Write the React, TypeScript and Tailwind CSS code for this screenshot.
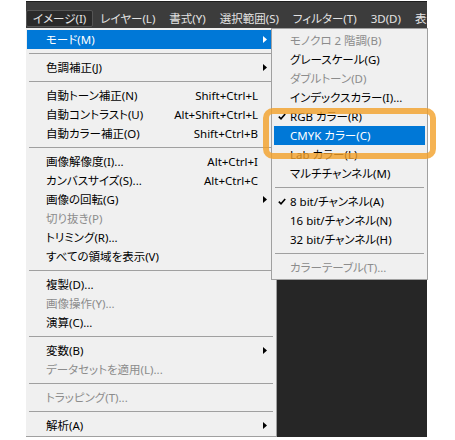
import React from "react";

type Item =
  | { kind: "sep" }
  | {
      kind?: "item";
      label: string;
      shortcut?: string;
      sub?: boolean;
      disabled?: boolean;
      active?: boolean;
      checked?: boolean;
    };

const SEP: Item = { kind: "sep" };

const mainItems: Item[] = [
  { label: "モード(M)", sub: true, active: true },
  SEP,
  { label: "色調補正(J)", sub: true },
  SEP,
  { label: "自動トーン補正(N)", shortcut: "Shift+Ctrl+L" },
  { label: "自動コントラスト(U)", shortcut: "Alt+Shift+Ctrl+L" },
  { label: "自動カラー補正(O)", shortcut: "Shift+Ctrl+B" },
  SEP,
  { label: "画像解像度(I)...", shortcut: "Alt+Ctrl+I" },
  { label: "カンバスサイズ(S)...", shortcut: "Alt+Ctrl+C" },
  { label: "画像の回転(G)", sub: true },
  { label: "切り抜き(P)", disabled: true },
  { label: "トリミング(R)..." },
  { label: "すべての領域を表示(V)" },
  SEP,
  { label: "複製(D)..." },
  { label: "画像操作(Y)...", disabled: true },
  { label: "演算(C)..." },
  SEP,
  { label: "変数(B)", sub: true },
  { label: "データセットを適用(L)...", disabled: true },
  SEP,
  { label: "トラッピング(T)...", disabled: true },
  SEP,
  { label: "解析(A)", sub: true },
];

const modeItems: Item[] = [
  { label: "モノクロ 2 階調(B)", disabled: true },
  { label: "グレースケール(G)" },
  { label: "ダブルトーン(D)", disabled: true },
  { label: "インデックスカラー(I)..." },
  { label: "RGB カラー(R)", checked: true },
  { label: "CMYK カラー(C)", active: true },
  { label: "Lab カラー(L)" },
  { label: "マルチチャンネル(M)" },
  SEP,
  { label: "8 bit/チャンネル(A)", checked: true },
  { label: "16 bit/チャンネル(N)" },
  { label: "32 bit/チャンネル(H)" },
  SEP,
  { label: "カラーテーブル(T)...", disabled: true },
];

const menuBar = ["イメージ(I)", "レイヤー(L)", "書式(Y)", "選択範囲(S)", "フィルター(T)", "3D(D)", "表示(V)"];

function Arrow({ white }: { white?: boolean }) {
  return (
    <svg width="4" height="7" viewBox="0 0 4 7" className="shrink-0">
      <path d="M0 0 L4 3.5 L0 7 Z" fill={white ? "#ffffff" : "#000000"} />
    </svg>
  );
}

function Check() {
  return (
    <svg width="8" height="7" viewBox="0 0 8 7">
      <path d="M0.8 3.6 L3 5.8 L7.2 1" fill="none" stroke="#000" strokeWidth="1.6" />
    </svg>
  );
}

function Separator({ inset }: { inset: string }) {
  return (
    <div className={`h-[9px] flex items-center ${inset}`}>
      <div className="h-px w-full bg-[#a0a0a0]" />
    </div>
  );
}

function MainMenu() {
  return (
    <div className="w-[251px] h-[409px] bg-[#f0f0f0] border-r border-b border-[#a0a0a0] py-[2px]">
      {mainItems.map((it, i) => {
        if (it.kind === "sep") return <Separator key={i} inset="pl-[3px] pr-[3px]" />;
        return (
          <div
            key={i}
            className={`h-[19px] flex items-center pl-[19px] pr-[9px] ml-[1px] ${
              it.active ? "bg-[#0078d7] text-white" : it.disabled ? "text-[#8c8c8c]" : "text-black"
            }`}
          >
            <span className="flex-1 whitespace-nowrap">{it.label}</span>
            {it.shortcut && <span className="whitespace-nowrap mr-[9px]">{it.shortcut}</span>}
            {it.sub && <Arrow white={it.active} />}
          </div>
        );
      })}
    </div>
  );
}

function ModeMenu() {
  return (
    <div className="w-[157px] bg-[#f0f0f0] border border-[#a0a0a0] py-[2px] px-[2px]">
      {modeItems.map((it, i) => {
        if (it.kind === "sep") return <Separator key={i} inset="px-[1px]" />;
        return (
          <div
            key={i}
            className={`h-[19px] flex items-center ${
              it.active ? "bg-[#0078d7] text-white" : it.disabled ? "text-[#8c8c8c]" : "text-black"
            }`}
          >
            <span className="w-[16px] flex justify-center">{it.checked && <Check />}</span>
            <span className="whitespace-nowrap">{it.label}</span>
          </div>
        );
      })}
    </div>
  );
}

export default function App() {
  return (
    <div className="w-[455px] h-[440px] bg-white pl-[26px] pt-[1px] font-['Noto_Sans','Noto_Sans_CJK_JP',sans-serif] text-[11.5px] [font-feature-settings:'palt'] overflow-hidden">
      <div className="relative w-[401px]">
        {/* menu bar */}
        <div className="h-[27px] bg-[#3c3c3c] border-t border-[#1e1e1e] flex items-end pb-[1px] overflow-hidden">
          {menuBar.map((m, i) => (
            <div
              key={m}
              className={`h-[17px] flex items-center px-[6px] whitespace-nowrap text-[#e3e3e3] rounded-[2px] ${
                i === 0 ? "bg-[#2a2a2a] border border-[#555555]" : "border border-transparent"
              }`}
            >
              {m}
            </div>
          ))}
        </div>

        {/* body */}
        <div className="flex">
          <MainMenu />
          <div className="flex-1 h-[409px] bg-[#262626]" />
        </div>

        {/* mode submenu */}
        <div className="absolute left-[245px] top-[27px]">
          <ModeMenu />
        </div>

        {/* highlight annotation */}
        <div className="absolute left-[237px] top-[107px] w-[173px] h-[51px] rounded-[10px] border-[6px] border-[#f3a028]/80" />
      </div>
    </div>
  );
}
